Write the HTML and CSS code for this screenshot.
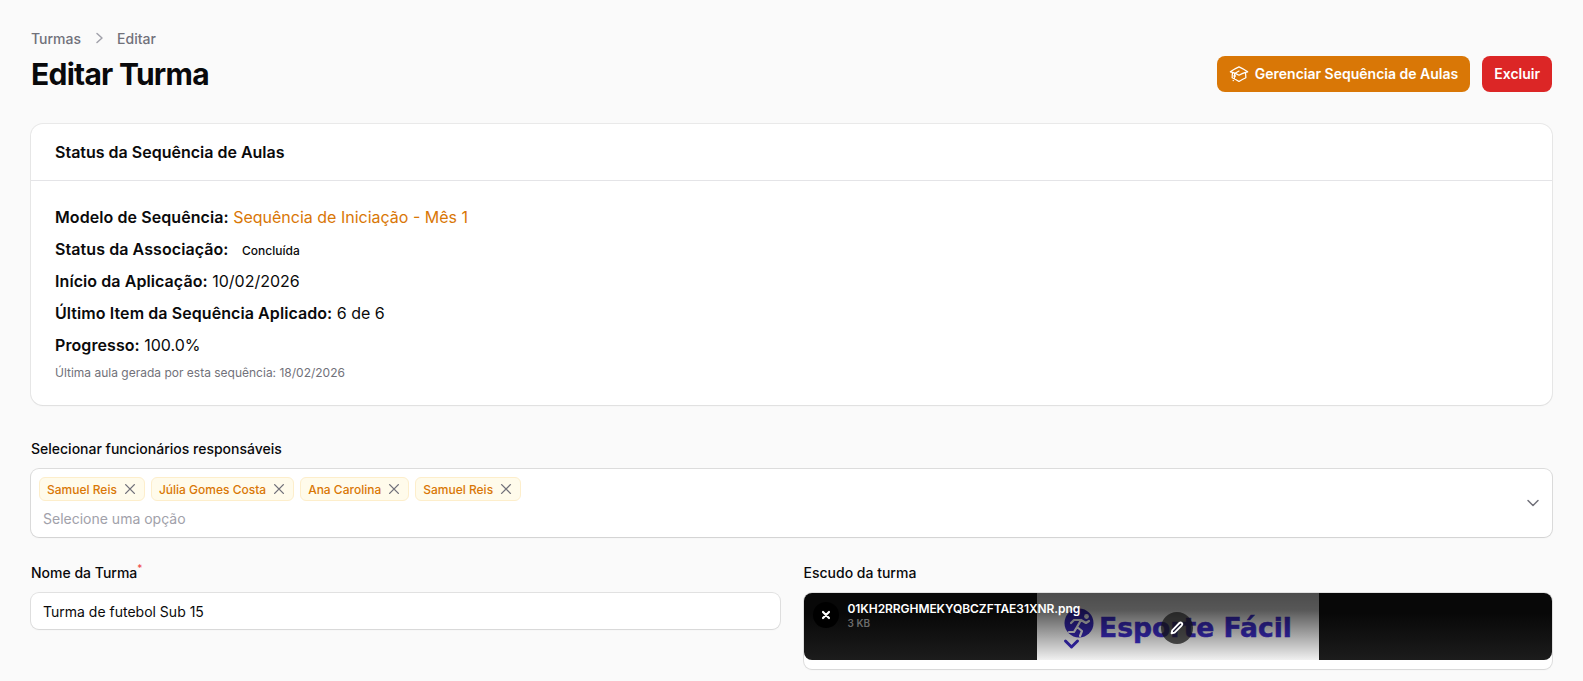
FILE: index.html
```html
<!DOCTYPE html>
<html lang="pt-BR">
<head>
<meta charset="utf-8">
<title>Editar Turma</title>
<link rel="stylesheet" href="styles.css">
</head>
<body>
<main class="page">
  <header class="page-head">
    <div>
      <nav class="crumbs">
        <span>Turmas</span>
        <svg class="crumb-sep" viewBox="0 0 20 20" fill="none" stroke="currentColor" stroke-width="1.5"><path d="M8 5.5 13 10l-5 4.5" stroke-linecap="round" stroke-linejoin="round"/></svg>
        <span>Editar</span>
      </nav>
      <h1 class="title">Editar Turma</h1>
    </div>
    <div class="actions">
      <button class="btn btn-amber">
        <svg class="btn-icon" viewBox="0 0 24 24" fill="none" stroke="currentColor" stroke-width="1.5" stroke-linecap="round" stroke-linejoin="round"><path d="M4.26 10.147a60 60 0 0 0-.491 6.347A48.6 48.6 0 0 1 12 20.904a48.6 48.6 0 0 1 8.232-4.41 61 61 0 0 0-.491-6.347m-15.482 0a51 51 0 0 0-2.658-.813A60 60 0 0 1 12 3.493a60 60 0 0 1 10.399 5.84 51 51 0 0 0-2.658.814m-15.482 0A51 51 0 0 1 12 13.489a50.7 50.7 0 0 1 7.74-3.342M6.75 15a.75.75 0 1 0 0-1.5.75.75 0 0 0 0 1.5m0 0v-3.675A55 55 0 0 1 12 8.443m-7.007 11.55A5.98 5.98 0 0 0 6.75 15.75v-1.5"/></svg>
        Gerenciar Sequência de Aulas
      </button>
      <button class="btn btn-red">Excluir</button>
    </div>
  </header>

  <section class="card">
    <h2 class="card-head">Status da Sequência de Aulas</h2>
    <div class="card-body">
      <p class="row"><b>Modelo de Sequência:</b> <span class="amber">Sequência de Iniciação - Mês 1</span></p>
      <p class="row"><b>Status da Associação:</b> <span class="badge">Concluída</span></p>
      <p class="row"><b>Início da Aplicação:</b> 10/02/2026</p>
      <p class="row"><b>Último Item da Sequência Aplicado:</b> 6 de 6</p>
      <p class="row"><b>Progresso:</b> 100.0%</p>
      <p class="note">Última aula gerada por esta sequência: 18/02/2026</p>
    </div>
  </section>

  <div class="field field-staff">
    <label class="label">Selecionar funcionários responsáveis</label>
    <div class="select">
      <div class="tags">
        <span class="tag">Samuel Reis<svg viewBox="0 0 16 16" fill="none" stroke="currentColor" stroke-width="1.6" stroke-linecap="round"><path d="m3 3 10 10M13 3 3 13"/></svg></span>
        <span class="tag">Júlia Gomes Costa<svg viewBox="0 0 16 16" fill="none" stroke="currentColor" stroke-width="1.6" stroke-linecap="round"><path d="m3 3 10 10M13 3 3 13"/></svg></span>
        <span class="tag">Ana Carolina<svg viewBox="0 0 16 16" fill="none" stroke="currentColor" stroke-width="1.6" stroke-linecap="round"><path d="m3 3 10 10M13 3 3 13"/></svg></span>
        <span class="tag">Samuel Reis<svg viewBox="0 0 16 16" fill="none" stroke="currentColor" stroke-width="1.6" stroke-linecap="round"><path d="m3 3 10 10M13 3 3 13"/></svg></span>
      </div>
      <div class="placeholder">Selecione uma opção</div>
      <svg class="chevron" viewBox="0 0 20 20" fill="none" stroke="currentColor" stroke-width="1.5" stroke-linecap="round" stroke-linejoin="round"><path d="m5 7.5 5 5 5-5"/></svg>
    </div>
  </div>

  <div class="form-grid">
    <div class="field">
      <label class="label">Nome da Turma<sup class="req">*</sup></label>
      <div class="input">Turma de futebol Sub 15</div>
    </div>
    <div class="field">
      <label class="label">Escudo da turma</label>
      <div class="upload">
        <div class="panel">
          <div class="logo">
            <svg class="logo-mark" viewBox="0 0 33 43" fill="none">
              <circle cx="17" cy="16" r="14.5" fill="#3a2ac0"/>
              <circle cx="24.5" cy="9.5" r="2.4" fill="#fff"/>
              <path d="M9 16l3-3h7l-4 7 5 4-2 5M19 13l5 3 3-2M15 20l-3 5H7" stroke="#fff" stroke-width="2.2" stroke-linecap="round" stroke-linejoin="round"/>
              <path d="m3.5 34 6 6 6-6" stroke="#3a2ac0" stroke-width="3" stroke-linecap="round" stroke-linejoin="round"/>
            </svg>
            <span class="logo-text">Esporte Fácil</span>
          </div>
          <div class="shade"></div>
          <button class="round round-x"><svg viewBox="0 0 16 16" fill="none" stroke="#fff" stroke-width="2.2" stroke-linecap="round"><path d="m5 5 6 6M11 5l-6 6"/></svg></button>
          <div class="file">
            <div class="file-name">01KH2RRGHMEKYQBCZFTAE31XNR.png</div>
            <div class="file-size">3 KB</div>
          </div>
          <button class="round round-edit"><svg viewBox="0 0 16 16" fill="none" stroke="#fff" stroke-width="1.9" stroke-linejoin="round"><path d="M10.4 3a1.6 1.6 0 0 1 2.4 2.3l-7.2 7.3-3 .7.7-3z"/></svg></button>
        </div>
      </div>
    </div>
  </div>
</main>
</body>
</html>
```

FILE: styles.css
```css
* { box-sizing: border-box; }
html, body { margin: 0; height: 100%; }
body {
  background: #fafafa;
  color: #0a0a0b;
  font-family: Inter, "Liberation Sans", sans-serif;
  overflow: hidden;
}
.page { padding: 28px 31px 0; }
.page-head {
  display: flex;
  justify-content: space-between;
  align-items: flex-end;
}
.crumbs {
  display: flex;
  align-items: center;
  gap: 8px;
  height: 20px;
  font-size: 14px;
  font-weight: 500;
  color: #71717a;
}
.crumb-sep { width: 20px; height: 20px; color: #a1a1aa; }
.title {
  margin: 8px 0 0;
  font-size: 30px;
  line-height: 36px;
  font-weight: 700;
  letter-spacing: -0.75px;
  color: #09090b;
}
.actions { display: flex; gap: 12px; }
.btn {
  display: flex;
  align-items: center;
  gap: 6px;
  height: 36px;
  padding: 0 12px;
  border: 0;
  border-radius: 8px;
  color: #fff;
  font: 600 14px/20px Inter, "Liberation Sans", sans-serif;
}
.btn-icon { width: 20px; height: 20px; }
.btn-amber { background: #d97706; }
.btn-red { background: #dc2626; }

.card {
  margin-top: 32px;
  background: #fff;
  border-radius: 12px;
  box-shadow: 0 0 0 1px rgba(9,9,11,.07), 0 1px 2px rgba(0,0,0,.05);
}
.card-head {
  margin: 0;
  padding: 16px 24px;
  height: 57px;
  font-size: 16px;
  line-height: 24px;
  font-weight: 600;
  border-bottom: 1px solid #e4e4e7;
}
.card-body { padding: 24px; }
.row { margin: 0 0 8px; height: 24px; font-size: 16px; line-height: 24px; }
.row b { font-weight: 600; letter-spacing: .08px; }
.amber { color: #d97706; }
.badge { font-size: 12px; line-height: 16px; font-weight: 500; margin-left: 9px; }
.note { margin: 0; font-size: 12px; line-height: 16px; color: #71717a; }

.field-staff { margin-top: 34px; }
.label {
  display: block;
  font-size: 14px;
  line-height: 20px;
  font-weight: 500;
  color: #09090b;
}
.req { color: #ef4444; font-size: 10px; line-height: 0; font-weight: 400; }
.select {
  position: relative;
  margin-top: 10px;
  padding: 8px;
  background: #fff;
  border-radius: 8px;
  box-shadow: 0 0 0 1px rgba(9,9,11,.12), 0 1px 2px rgba(0,0,0,.05);
}
.tags { display: flex; gap: 6px; }
.tag {
  display: flex;
  align-items: center;
  gap: 6px;
  height: 24px;
  padding: 0 7px;
  background: #fffbeb;
  border: 1px solid #fdeecb;
  border-radius: 6px;
  font-size: 12px;
  font-weight: 500;
  color: #d97706;
}
.tag svg { width: 14px; height: 14px; color: #71717a; }
.placeholder { margin: 8px 0 0 4px; font-size: 14px; line-height: 20px; color: #a1a1aa; }
.chevron {
  position: absolute;
  right: 9px;
  top: 24px;
  width: 20px;
  height: 20px;
  color: #71717a;
}

.form-grid {
  display: grid;
  grid-template-columns: 1fr 1fr;
  gap: 24px;
  margin-top: 26px;
}
.input {
  margin-top: 10px;
  height: 36px;
  padding: 0 12px;
  display: flex;
  align-items: center;
  background: #fff;
  border-radius: 8px;
  box-shadow: 0 0 0 1px rgba(9,9,11,.1), 0 1px 2px rgba(0,0,0,.05);
  font-size: 14px;
}
.upload {
  margin-top: 10px;
  height: 76px;
  background: #fff;
  border-radius: 8px;
  box-shadow: 0 0 0 1px rgba(9,9,11,.1), 0 1px 2px rgba(0,0,0,.05);
}
.panel {
  position: relative;
  height: 67px;
  overflow: hidden;
  border-radius: 8px;
  background: linear-gradient(#080808 30%, #1c1c1c 100%);
}
.logo {
  position: absolute;
  left: 233px;
  top: 0;
  width: 282px;
  height: 67px;
  display: flex;
  align-items: center;
  background: #fff;
  padding-left: 25.5px;
}
.logo-mark { width: 33px; height: 43px; flex: none; margin-top: 4px; }
.logo-text {
  margin: 2px 0 0 4px;
  font-family: "DejaVu Sans", Inter, sans-serif;
  font-size: 26.6px;
  line-height: 40px;
  font-weight: 700;
  color: #3f2ed0;
  -webkit-text-stroke: .5px #3f2ed0;
  white-space: nowrap;
}
.shade {
  position: absolute;
  left: 233px;
  top: 0;
  width: 282px;
  height: 67px;
  background: linear-gradient(rgba(0,0,0,.7) 0%, rgba(0,0,0,.66) 25%, rgba(0,0,0,.06) 100%);
}
.round {
  position: absolute;
  border: 0;
  padding: 0;
  border-radius: 50%;
  display: flex;
  align-items: center;
  justify-content: center;
}
.round svg { width: 16px; height: 16px; }
.round-x { left: 9px; top: 9px; width: 26px; height: 26px; background: #000; }
.round-edit { left: 357px; top: 19px; width: 32px; height: 32px; background: rgba(20,20,20,.72); }
.file { position: absolute; left: 44px; top: 8px; color: #fff; }
.file-name { font-size: 12px; line-height: 16px; font-weight: 600; white-space: nowrap; letter-spacing: -.06px; }
.file-size { font-size: 10px; line-height: 12px; font-weight: 600; color: #6b6b6b; }
```
